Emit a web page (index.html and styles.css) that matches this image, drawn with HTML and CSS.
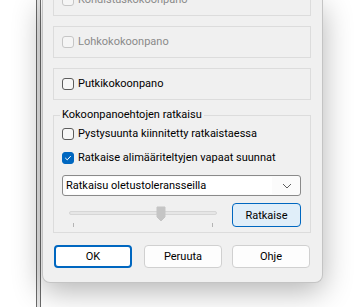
FILE: index.html
```html
<!DOCTYPE html>
<html lang="fi">
<head>
    <meta charset="UTF-8">
    <title>Kokoonpanoasetukset</title>
    <link rel="stylesheet" href="styles.css">
</head>
<body>
    <div class="screen">
        <div class="shade"></div>
        <div class="frame"></div>
        <div class="stage">
            <div class="dialog">
                <div class="group group-first disabled">
                    <label class="check"><span class="box"></span>Kohdistuskokoonpano</label>
                </div>
                <div class="group disabled">
                    <label class="check"><span class="box"></span>Lohkokokoonpano</label>
                </div>
                <div class="group">
                    <label class="check"><span class="box"></span>Putkikokoonpano</label>
                </div>

                <fieldset class="solve">
                    <legend>Kokoonpanoehtojen ratkaisu</legend>
                    <label class="check row"><span class="box"></span>Pystysuunta kiinnitetty ratkaistaessa</label>
                    <label class="check row"><span class="box checked"><svg viewBox="0 0 12 12" width="12" height="12"><path d="M3 6.2 L5.1 8.2 L9 4" fill="none" stroke="#fff" stroke-width="1.2" stroke-linecap="round" stroke-linejoin="round"/></svg></span>Ratkaise alimääriteltyjen vapaat suunnat</label>
                    <div class="combo">
                        <span class="combo-text">Ratkaisu oletustoleransseilla</span>
                        <svg class="chevron" viewBox="0 0 10 6" width="10" height="6"><path d="M1 1 L5 5 L9 1" fill="none" stroke="#5f5f5f" stroke-width="1"/></svg>
                    </div>
                    <div class="slider-row">
                        <div class="slider">
                            <div class="track"></div>
                            <svg class="thumb" viewBox="0 0 10 16" width="10" height="16"><path d="M1 1 H9 V11 L5 15 L1 11 Z" fill="#c5c5c5" stroke="#c5c5c5" stroke-width="1" stroke-linejoin="round"/></svg>
                            <span class="tick tick-start"></span>
                            <span class="tick tick-end"></span>
                        </div>
                        <button type="button" class="btn btn-accent">Ratkaise</button>
                    </div>
                </fieldset>

                <div class="actions">
                    <button type="button" class="btn btn-default">OK</button>
                    <button type="button" class="btn">Peruuta</button>
                    <button type="button" class="btn">Ohje</button>
                </div>
            </div>
        </div>
    </div>
</body>
</html>
```

FILE: styles.css
```css
* {
    box-sizing: border-box;
    margin: 0;
    padding: 0;
}
body {
    width: 362px;
    height: 307px;
    overflow: hidden;
    background: #ffffff;
    font-family: Roboto, 'Noto Sans', sans-serif;
    font-size: 11px;
    color: #000000;
}
.screen {
    display: flex;
    height: 307px;
}
.shade {
    width: 36px;
}
.frame {
    width: 5px;
    background: #e6e6e6;
    border-left: 1px solid #6a6a6a;
    border-right: 1px solid #6a6a6a;
}
.stage {
    flex: 1;
    padding-left: 1px;
}
.dialog {
    width: 281px;
    height: 283px;
    background: #f0f0f0;
    border: 1px solid #c4c4c4;
    border-top: none;
    border-radius: 0 0 8px 8px;
    box-shadow: 0 8px 30px rgba(0, 0, 0, 0.3);
    padding: 0 11px 0 10px;
    display: flex;
    flex-direction: column;
}
.group {
    height: 32px;
    border: 1px solid #dcdcdc;
    display: flex;
    align-items: center;
    padding-left: 8px;
    margin-bottom: 10px;
}
.group-first {
    margin-top: -16px;
}
.check {
    display: flex;
    align-items: center;
    gap: 4px;
    line-height: 16px;
    white-space: nowrap;
}
.box {
    width: 12px;
    height: 12px;
    border: 1px solid #5c5c5c;
    border-radius: 3px;
    background: #f7f7f7;
    display: flex;
    align-items: center;
    justify-content: center;
}
.box.checked {
    background: #0067c0;
    border-color: #0067c0;
}
.disabled .check {
    color: #8a8a8a;
}
.disabled .box {
    border-color: #c6c6c6;
    background: #f5f5f5;
}
.solve {
    margin-top: -2px;
    border: 1px solid #dcdcdc;
    padding: 0 9px 5px 8px;
}
.solve legend {
    line-height: 14px;
    padding: 0 2px;
    margin-left: -2px;
}
.row {
    height: 24px;
}
.combo {
    margin-top: 5px;
    height: 21px;
    border: 1px solid #8a8a8a;
    border-radius: 3px;
    background: #fbfbfb;
    display: flex;
    align-items: center;
    padding: 0 8px 0 3px;
}
.combo-text {
    flex: 1;
    background: #ffffff;
    line-height: 17px;
    margin-right: 10px;
    white-space: nowrap;
}
.slider-row {
    margin-top: 7px;
    display: flex;
    align-items: flex-start;
}
.slider {
    position: relative;
    width: 148px;
    height: 24px;
    margin-left: 7px;
}
.track {
    margin-top: 8px;
    height: 4px;
    border: 1px solid #d6d6d6;
    background: #e6e6e6;
    border-radius: 2px;
}
.thumb {
    position: absolute;
    left: 87px;
    top: 3px;
}
.tick {
    position: absolute;
    top: 20px;
    width: 1px;
    height: 4px;
    background: #b4b4b4;
}
.tick-start {
    left: 4px;
}
.tick-end {
    left: 143px;
}
.btn {
    font-family: inherit;
    font-size: 11px;
    color: #000000;
    width: 78px;
    height: 23px;
    background: #fdfdfd;
    border: 1px solid #d0d0d0;
    border-radius: 4px;
}
.btn-accent {
    margin-left: auto;
    width: 69px;
    height: 24px;
    background: #e0eef9;
    border-color: #0067c0;
}
.btn-default {
    border: 2px solid #0067c0;
    background: #ffffff;
}
.actions {
    margin-top: 12px;
    display: flex;
    padding-left: 1px;
}
.actions .btn + .btn {
    margin-left: 12px;
}
.actions .btn:last-child {
    margin-left: 10px;
}
```
